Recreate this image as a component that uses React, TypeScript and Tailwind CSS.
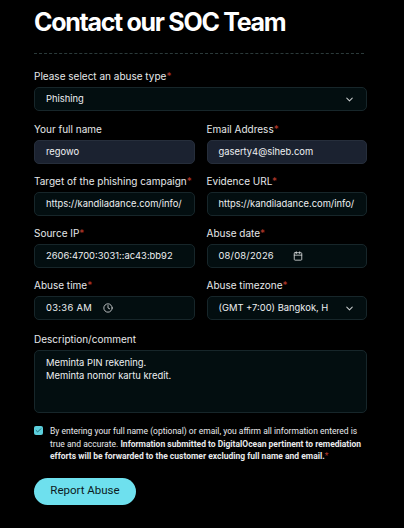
import { ChevronDown, Calendar, Clock, Check } from "lucide-react";

function Label({ text, required }: { text: string; required?: boolean }) {
  return (
    <label className="block text-[10px] leading-[12px] text-[#e6e8ea] mb-[5px] whitespace-nowrap">
      {text}
      {required && <span className="text-[#b83a2c]">*</span>}
    </label>
  );
}

function Box({ children, tone = "dark", className = "" }: { children: React.ReactNode; tone?: "dark" | "fill"; className?: string }) {
  const bg = tone === "fill" ? "bg-[#1b2230] border-[#262e3b]" : "bg-[#030e10] border-[#17262a]";
  return (
    <div className={`h-[24px] rounded-[5px] border ${bg} flex items-center px-[11px] text-[9.4px] text-[#eef0f2] whitespace-nowrap overflow-hidden ${className}`}>
      {children}
    </div>
  );
}

export default function App() {
  return (
    <div className="min-h-[528px] bg-black text-white pl-[34px] pr-[37px] pt-[5px]" style={{ fontFamily: "Inter, 'Liberation Sans', sans-serif" }}>
      <h1 className="text-[25px] leading-[34px] font-bold tracking-[-1.3px] text-white">Contact our SOC Team</h1>
      <div className="mt-[14px] border-t border-dashed border-[#2b3a3a] w-[330px]" />

      <div className="mt-[16px]">
        <Label text="Please select an abuse type" required />
        <Box className="justify-between">
          <span>Phishing</span>
          <ChevronDown size={11} strokeWidth={2.2} className="text-[#c8cccd]" />
        </Box>
      </div>

      <div className="grid grid-cols-[minmax(0,1fr)_minmax(0,1fr)] gap-x-[12px] gap-y-[11px] mt-[12px]">
        <div>
          <Label text="Your full name" />
          <Box tone="fill">regowo</Box>
        </div>
        <div>
          <Label text="Email Address" required />
          <Box tone="fill">gaserty4@siheb.com</Box>
        </div>
        <div>
          <Label text="Target of the phishing campaign" required />
          <Box>https://kandiladance.com/info/</Box>
        </div>
        <div>
          <Label text="Evidence URL" required />
          <Box>https://kandiladance.com/info/</Box>
        </div>
        <div>
          <Label text="Source IP" required />
          <Box>2606:4700:3031::ac43:bb92</Box>
        </div>
        <div>
          <Label text="Abuse date" required />
          <Box>
            <span className="tracking-[0.2px]">08/08/2026</span>
            <Calendar size={10} strokeWidth={2} className="ml-[19px] text-[#d8dbdc]" />
          </Box>
        </div>
        <div>
          <Label text="Abuse time" required />
          <Box>
            <span className="tracking-[0.3px]">03:36 AM</span>
            <Clock size={10} strokeWidth={2} className="ml-[11px] text-[#d8dbdc]" />
          </Box>
        </div>
        <div>
          <Label text="Abuse timezone" required />
          <Box className="justify-between">
            <span>(GMT +7:00) Bangkok, H</span>
            <ChevronDown size={11} strokeWidth={2.2} className="text-[#c8cccd]" />
          </Box>
        </div>
      </div>

      <div className="mt-[13px]">
        <Label text="Description/comment" />
        <div className="h-[63px] rounded-[5px] border border-[#17262a] bg-[#030e10] px-[11px] pt-[5px] text-[9.4px] leading-[13px] text-[#eef0f2]">
          <div>Meminta PIN rekening.</div>
          <div>Meminta nomor kartu kredit.</div>
        </div>
      </div>

      <div className="mt-[12px] flex gap-[7px]">
        <div className="mt-[1px] w-[9px] h-[9px] shrink-0 rounded-[2px] bg-[#5ccfdc] flex items-center justify-center">
          <Check size={7} strokeWidth={3} className="text-[#1b5a66]" />
        </div>
        <p className="text-[8.5px] leading-[12.5px] text-[#e8eaec]" style={{ fontFamily: "Roboto, Inter, sans-serif" }}>
          By entering your full name (optional) or email, you affirm all information entered is true and accurate.{" "}
          <span className="font-bold">
            Information submitted to DigitalOcean pertinent to remediation efforts will be forwarded to the customer excluding full name and email.
          </span>
          <span className="text-[#b83a2c]">*</span>
        </p>
      </div>

      <button className="mt-[15px] h-[27px] w-[102px] rounded-full bg-[#6ee0ee] text-[#0c1a22] text-[11.5px]" style={{ fontFamily: "Roboto, Inter, sans-serif" }}>
        Report Abuse
      </button>
    </div>
  );
}
